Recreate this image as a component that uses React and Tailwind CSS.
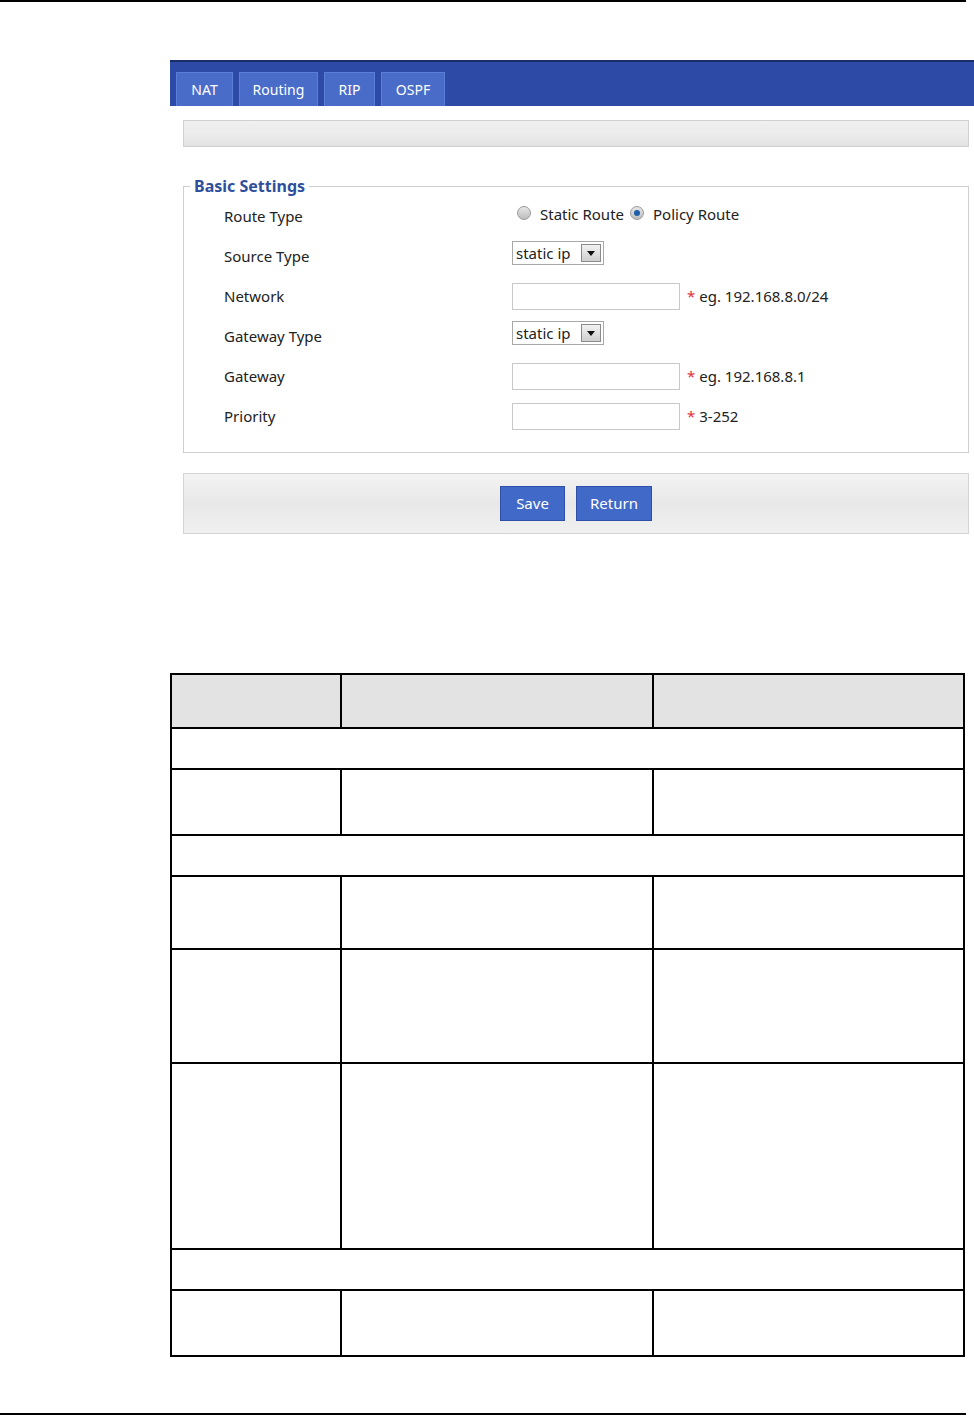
const rows = [
  { label: "Route Type", type: "radio" },
  { label: "Source Type", type: "select" },
  { label: "Network", type: "input", hint: "eg. 192.168.8.0/24" },
  { label: "Gateway Type", type: "select" },
  { label: "Gateway", type: "input", hint: "eg. 192.168.8.1" },
  { label: "Priority", type: "input", hint: "3-252" },
];

const Radio = ({ checked }) => (
  <span className="relative inline-block h-[14px] w-[14px] rounded-full border border-[#9a9a9a] bg-gradient-to-b from-[#e6e6e6] to-[#bdbdbd]">
    {checked && (
      <span className="absolute left-[3px] top-[3px] h-[6px] w-[6px] rounded-full bg-[#1d5fa8]" />
    )}
  </span>
);

const Select = () => (
  <div className="flex h-[24px] w-[92px] items-center border border-[#a8a8a8] bg-white pl-[3px] text-[15px]">
    <span className="flex-1 leading-none">static ip</span>
    <span className="mr-[2px] flex h-[18px] w-[20px] items-center justify-center border border-[#8a8a8a] bg-gradient-to-b from-[#f2f2f2] to-[#cfcfcf]">
      <svg width="8" height="5" viewBox="0 0 8 5">
        <path d="M0 0h8L4 5z" fill="#111" />
      </svg>
    </span>
  </div>
);

const FormRow = ({ row }) => (
  <div className="flex h-[40px] items-center">
    <div className="w-[328px] pl-[40px] text-[15px] text-[#222]">{row.label}</div>
    <div className="flex items-center text-[15px] text-[#222]">
      {row.type === "radio" && (
        <div className="-mt-[4px] flex items-center">
          <span className="ml-[5px]"><Radio /></span>
          <span className="ml-[9px]">Static Route</span>
          <span className="ml-[6px]"><Radio checked /></span>
          <span className="ml-[9px]">Policy Route</span>
        </div>
      )}
      {row.type === "select" && <div className="-mt-[6px]"><Select /></div>}
      {row.type === "input" && (
        <div className="flex items-center">
          <div className="h-[27px] w-[168px] border border-[#c8c8c8] bg-white" />
          <span className="ml-[7px] text-[#e03030]">*</span>
          <span className="ml-[4px]">{row.hint}</span>
        </div>
      )}
    </div>
  </div>
);

const tabs = [
  { t: "NAT", w: "w-[57px]" },
  { t: "Routing", w: "w-[79px]" },
  { t: "RIP", w: "w-[51px]" },
  { t: "OSPF", w: "w-[64px]" },
];

export default function App() {
  const tableRows = [
    { h: 54, header: true },
    { h: 41, span: true },
    { h: 66 },
    { h: 41, span: true },
    { h: 73 },
    { h: 114 },
    { h: 186 },
    { h: 41, span: true },
    { h: 66 },
  ];

  return (
    <div className="relative h-[1416px] w-[974px] overflow-hidden bg-white font-['Noto_Sans',sans-serif]">
      <div className="h-[2px] w-[966px] bg-black" />

      {/* screenshot of router page */}
      <div className="ml-[170px] mt-[58px] w-[804px]">
        <div className="flex h-[46px] items-end gap-[6px] border-t-2 border-[#1b2d66] bg-[#2d4aa6] pl-[6px]">
          {tabs.map((t) => (
            <div
              key={t.t}
              className={`flex h-[34px] items-center justify-center border border-b-0 border-[#5a7fd6] bg-[#4a6cc9] text-[14px] text-white ${t.w}`}
            >
              {t.t}
            </div>
          ))}
        </div>

        <div className="ml-[13px] mt-[14px] h-[27px] w-[786px] border border-[#d0d0d0] bg-gradient-to-b from-[#f0f0f0] via-[#ececec] to-[#e2e2e2]" />

        <fieldset className="ml-[13px] mt-[27px] w-[786px] border border-[#cfcfcf] px-0 pb-[16px] pt-0">
          <legend className="ml-[6px] px-[4px] text-[16px] font-bold text-[#2f4f9c]">
            Basic Settings
          </legend>
          <div className="-mt-[2px]">
            {rows.map((r) => (
              <FormRow key={r.label} row={r} />
            ))}
          </div>
        </fieldset>

        <div className="ml-[13px] mt-[20px] flex h-[61px] w-[786px] items-center justify-center gap-[11px] border border-[#d4d4d4] bg-gradient-to-b from-[#f3f3f3] via-[#e8e8e8] to-[#f0f0f0]">
          <button className="h-[35px] w-[65px] border border-[#2e4fa8] bg-[#4169c8] text-[15px] text-white">
            Save
          </button>
          <button className="h-[35px] w-[76px] border border-[#2e4fa8] bg-[#4169c8] text-[15px] text-white">
            Return
          </button>
        </div>
      </div>

      {/* empty table */}
      <table className="ml-[170px] mt-[139px] w-[795px] border-collapse">
        <tbody>
          {tableRows.map((r, i) => (
            <tr key={i}>
              {r.span ? (
                <td colSpan={3} className="border-2 border-black p-0" style={{ height: r.h }} />
              ) : (
                <>
                  <td className={`w-[170px] border-2 border-black p-0 ${r.header ? "bg-[#e3e3e3]" : ""}`} style={{ height: r.h }} />
                  <td className={`w-[312px] border-2 border-black p-0 ${r.header ? "bg-[#e3e3e3]" : ""}`} />
                  <td className={`border-2 border-black p-0 ${r.header ? "bg-[#e3e3e3]" : ""}`} />
                </>
              )}
            </tr>
          ))}
        </tbody>
      </table>

      <div className="absolute bottom-[1px] left-0 h-[2px] w-[966px] bg-black" />
    </div>
  );
}
